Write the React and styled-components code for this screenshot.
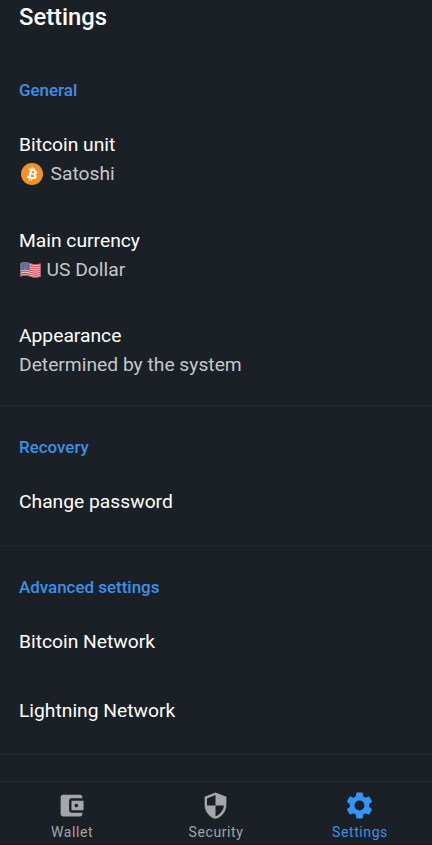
import React from 'react'
import styled, { createGlobalStyle } from 'styled-components'
import { MdAccountBalanceWallet } from 'react-icons/md'

const BACKGROUND = '#1b2026'
const BLUE = '#3d90e6'
const MUTED = '#c5c7ca'
const DIVIDER = '#1d2830'

const GlobalStyle = createGlobalStyle`
  html, body {
    margin: 0;
    background: ${BACKGROUND};
  }
`
const Screen = styled.div`
  height: 845px;
  display: flex;
  flex-direction: column;
  overflow: hidden;
  background: ${BACKGROUND};
  font-family: Roboto, sans-serif;
`
const Title = styled.h1`
  margin: 0;
  padding: 2px 19px 0;
  height: 49px;
  box-sizing: border-box;
  color: #fff;
  font-size: 23.8px;
  font-weight: 500;
  line-height: 31px;
`
const Section = styled.section`
  height: ${({ $height }) => $height}px;
  box-sizing: border-box;
  padding: 29px 19px 0;
  border-bottom: 1px solid ${DIVIDER};
`
const SectionTitle = styled.h2`
  margin: 0 0 31px;
  color: ${BLUE};
  font-size: 16.95px;
  font-weight: 500;
  line-height: 24px;
`
const Row = styled.div`
  margin-bottom: ${({ $gap }) => $gap || 0}px;
`
const RowLabel = styled.div`
  color: #fff;
  font-size: 19.25px;
  line-height: 24px;
`
const RowValue = styled.div`
  display: flex;
  align-items: center;
  gap: ${({ $gap }) => $gap || 0}px;
  margin-top: 5px;
  color: ${MUTED};
  font-size: 19.25px;
  line-height: 24px;
`
const Coin = styled.svg`
  margin: 0 0 1px 2px;
`
const TabBar = styled.nav`
  height: 64px;
  margin-top: auto;
  box-sizing: border-box;
  display: grid;
  grid-template-columns: repeat(3, 1fr);
  border-top: 1px solid #242b32;
  border-bottom: 1px solid #1a161b;
`
const Tab = styled.div`
  display: flex;
  flex-direction: column;
  align-items: center;
  padding-top: 8px;
  color: ${({ $active }) => ($active ? BLUE : '#a1a4a7')};
  font-size: 14px;
  line-height: 20px;
  letter-spacing: 0.6px;
`
const TabIcon = styled.div`
  height: 31px;
  display: flex;
  align-items: center;
  padding: 0 1px 1px 0;
  color: ${({ $active }) => ($active ? '#3296f8' : '#a3a7aa')};
`

const BitcoinIcon = () => (
  <Coin width="22" height="22" viewBox="0 0 32 32">
    <circle cx="16" cy="16" r="16" fill="#f0922a" />
    <path
      fill="#fff"
      d="M23.19 14.02c.31-2.1-1.28-3.22-3.47-3.98l.71-2.84-1.73-.43-.69 2.76-1.39-.32.7-2.79-1.73-.43-.71 2.84-3.49-.87-.46 1.85s1.28.3 1.26.31c.7.18.83.64.81 1.01l-1.97 7.89c-.09.21-.31.54-.8.41l-1.26-.31-.86 1.99 3.5.87-.72 2.87 1.73.43.71-2.84 1.38.36-.71 2.82 1.73.43.72-2.87c2.95.56 5.17.33 6.11-2.34.75-2.15-.04-3.39-1.59-4.2 1.13-.26 1.98-1 2.21-2.53zm-3.95 5.54c-.53 2.15-4.16.99-5.33.7l.95-3.81c1.17.29 4.94.87 4.38 3.11zm.54-5.57c-.49 1.96-3.51.96-4.49.72l.86-3.45c.98.24 4.14.7 3.63 2.73z"
    />
  </Coin>
)

const FlagIcon = () => (
  <svg width="23" height="18" viewBox="0 0 22 18">
    <path d="M1 2.5C5 .5 8 1.5 11 2.5s6 1.5 10 0v13c-4 1.5-7 1-10 0s-6-1.5-10 0z" fill="#e4d9dd" />
    <g fill="none" stroke="#cf4b57" strokeWidth="1.15">
      {[0, 2.1, 4.2, 6.3, 8.4, 10.5, 12.4].map(y => (
        <path key={y} d="M1 2.8c4-2 7-1 10 0s6 1.5 10 0" transform={`translate(0 ${y})`} />
      ))}
    </g>
    <path d="M1 2.4C4 1 7 1.1 10 2.2V9.2C7 8 4 8 1 9.3z" fill="#536a9e" />
    <g fill="#b9c3dc">
      {[3, 5, 7].map(y => [2.6, 5, 7.4].map(x => <circle key={`${x}-${y}`} cx={x} cy={y} r=".45" />))}
    </g>
  </svg>
)

const ShieldIcon = ({ size }) => (
  <svg width={size} height={size} viewBox="0 0 24 24" fill="currentColor">
    <path d="M12 1.2 3 4.8V11.5c0 5.7 4.5 10.5 9 11.5 4.5-1 9-5.8 9-11.5V4.8zM12 12h7c-.5 4.3-3.6 7.9-7 8.9V12H5V6.2l7-2.9z" />
  </svg>
)

const GearIcon = ({ size }) => (
  <svg width={size} height={size} viewBox="0 0 24 24" fill="currentColor">
    <path d="M12 15.9a3.9 3.9 0 1 1 0-7.8 3.9 3.9 0 0 1 0 7.8m7.43-2.93c.04-.32.07-.64.07-.97s-.03-.66-.07-1l2.11-1.63c.19-.15.24-.42.12-.64l-2-3.46c-.12-.22-.39-.31-.61-.22l-2.49 1c-.52-.39-1.06-.73-1.69-.98l-.37-2.65A.506.506 0 0 0 14 2h-4c-.25 0-.46.18-.5.42l-.37 2.65c-.63.25-1.17.59-1.69.98l-2.49-1c-.22-.09-.49 0-.61.22l-2 3.46c-.13.22-.07.49.12.64L4.57 11c-.04.34-.07.67-.07 1s.03.65.07.97l-2.11 1.66c-.19.15-.25.42-.12.64l2 3.46c.12.22.39.3.61.22l2.49-1.01c.52.4 1.06.74 1.69.99l.37 2.65c.04.24.25.42.5.42h4c.25 0 .46-.18.5-.42l.37-2.65c.63-.26 1.17-.59 1.69-.99l2.49 1.01c.22.08.49 0 .61-.22l2-3.46c.12-.22.07-.49-.12-.64z" />
  </svg>
)

const tabs = [
  { label: 'Wallet', Icon: MdAccountBalanceWallet, size: 29 },
  { label: 'Security', Icon: ShieldIcon, size: 29 },
  { label: 'Settings', Icon: GearIcon, size: 31, active: true },
]

const App = () => (
  <>
    <GlobalStyle />
    <Screen>
      <Title>Settings</Title>
      <Section $height={357}>
        <SectionTitle>General</SectionTitle>
        <Row $gap={43}>
          <RowLabel>Bitcoin unit</RowLabel>
          <RowValue $gap={7.5}>
            <BitcoinIcon />
            Satoshi
          </RowValue>
        </Row>
        <Row $gap={42}>
          <RowLabel>Main currency</RowLabel>
          <RowValue $gap={4.5}>
            <FlagIcon />
            US Dollar
          </RowValue>
        </Row>
        <Row>
          <RowLabel>Appearance</RowLabel>
          <RowValue>Determined by the system</RowValue>
        </Row>
      </Section>
      <Section $height={140}>
        <SectionTitle>Recovery</SectionTitle>
        <Row>
          <RowLabel>Change password</RowLabel>
        </Row>
      </Section>
      <Section $height={209}>
        <SectionTitle>Advanced settings</SectionTitle>
        <Row $gap={45}>
          <RowLabel>Bitcoin Network</RowLabel>
        </Row>
        <Row>
          <RowLabel>Lightning Network</RowLabel>
        </Row>
      </Section>
      <TabBar>
        {tabs.map(({ label, Icon, size, active }) => (
          <Tab key={label} $active={active}>
            <TabIcon $active={active}>
              <Icon size={size} />
            </TabIcon>
            {label}
          </Tab>
        ))}
      </TabBar>
    </Screen>
  </>
)

export default App
